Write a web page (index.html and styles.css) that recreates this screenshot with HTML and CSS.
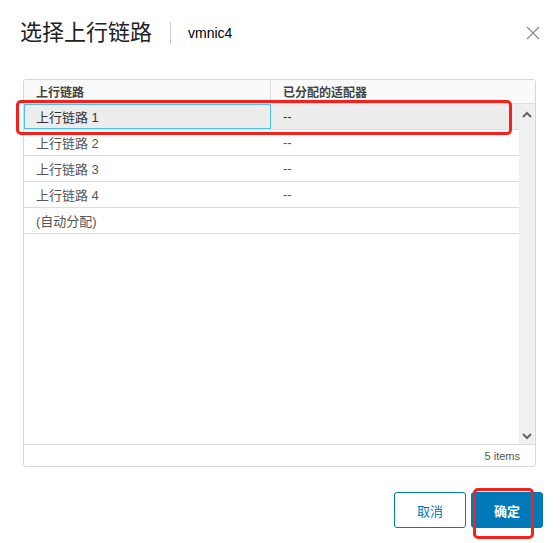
FILE: index.html
```html
<!DOCTYPE html>
<html lang="zh-CN">
<head>
    <meta charset="UTF-8">
    <title>选择上行链路</title>
    <link rel="stylesheet" href="styles.css">
</head>
<body>
    <div class="dialog">
        <div class="dialog-header">
            <h1 class="title">选择上行链路</h1>
            <span class="divider"></span>
            <span class="subtitle">vmnic4</span>
            <svg class="close" width="14" height="14" viewBox="0 0 14 14">
                <path d="M1 1 L13 13 M13 1 L1 13" stroke="#8c8c8c" stroke-width="1.3" fill="none"/>
            </svg>
        </div>

        <div class="grid">
            <div class="grid-head">
                <div class="cell col-a">上行链路</div>
                <div class="cell col-b">已分配的适配器</div>
            </div>
            <div class="grid-body">
                <div class="rows">
                    <div class="row selected">
                        <div class="cell col-a focused">上行链路 1</div>
                        <div class="cell col-b">--</div>
                    </div>
                    <div class="row">
                        <div class="cell col-a">上行链路 2</div>
                        <div class="cell col-b">--</div>
                    </div>
                    <div class="row">
                        <div class="cell col-a">上行链路 3</div>
                        <div class="cell col-b">--</div>
                    </div>
                    <div class="row">
                        <div class="cell col-a">上行链路 4</div>
                        <div class="cell col-b">--</div>
                    </div>
                    <div class="row">
                        <div class="cell col-a">(自动分配)</div>
                        <div class="cell col-b"></div>
                    </div>
                </div>
                <div class="scrollbar">
                    <svg width="10" height="8" viewBox="0 0 10 8"><path d="M1 6 L5 2 L9 6" stroke="#666" stroke-width="2" fill="none"/></svg>
                    <svg width="10" height="8" viewBox="0 0 10 8"><path d="M1 2 L5 6 L9 2" stroke="#666" stroke-width="2" fill="none"/></svg>
                </div>
            </div>
            <div class="grid-foot">5 items</div>
        </div>

        <div class="actions">
            <button class="btn btn-outline">取消</button>
            <button class="btn btn-primary">确定</button>
        </div>
    </div>

    <!-- red annotation boxes from the screenshot -->
    <div class="mark mark-row"></div>
    <div class="mark mark-ok"></div>
</body>
</html>
```

FILE: styles.css
```css
* {
    margin: 0;
    padding: 0;
    box-sizing: border-box;
}
body {
    width: 560px;
    height: 543px;
    background: #fff;
    font-family: "Liberation Sans", "Noto Sans CJK SC", sans-serif;
    color: #333;
    position: relative;
    overflow: hidden;
}
.dialog {
    padding: 18px 17px 0 23px;
}
.dialog-header {
    display: flex;
    align-items: center;
    height: 30px;
    margin-left: -3px;
    padding-right: 3px;
}
.title {
    font-size: 22px;
    font-weight: normal;
    line-height: 30px;
    color: #222;
}
.divider {
    width: 1px;
    height: 22px;
    background: #ccc;
    margin: 0 17px 0 18px;
}
.subtitle {
    font-size: 14px;
    color: #000;
}
.close {
    margin-left: auto;
    margin-right: 0;
}
.grid {
    margin-top: 31px;
    width: 513px;
    height: 388px;
    border: 1px solid #d7d7d7;
    border-radius: 3px;
    display: flex;
    flex-direction: column;
}
.grid-head {
    display: flex;
    height: 24px;
    background: #fafafa;
    border-bottom: 1px solid #ddd;
    font-weight: bold;
    font-size: 12px;
    color: #444;
}
.cell {
    padding-left: 12px;
    display: flex;
    align-items: center;
    white-space: nowrap;
}
.col-a {
    width: 247px;
    border-right: 1px solid #ddd;
}
.col-b {
    flex: 1;
}
.grid-body {
    flex: 1;
    display: flex;
}
.rows {
    flex: 1;
}
.row {
    display: flex;
    height: 26px;
    border-bottom: 1px solid #ddd;
    font-size: 13px;
    color: #565656;
}
.row .col-a {
    border-right: none;
}
.row.selected {
    background: #ededed;
    color: #333;
}
.row .focused {
    border: 1px solid #49c3f0;
    padding-left: 11px;
    width: 247px;
}
.scrollbar {
    width: 16px;
    background: #f0f0f0;
    display: flex;
    flex-direction: column;
    justify-content: space-between;
    align-items: center;
    padding: 7px 0 4px;
}
.grid-foot {
    height: 22px;
    border-top: 1px solid #ddd;
    font-size: 11px;
    color: #565656;
    display: flex;
    align-items: center;
    justify-content: flex-end;
    padding-right: 15px;
}
.actions {
    display: flex;
    justify-content: flex-end;
    gap: 5px;
    margin-top: 25px;
}
.btn {
    width: 72px;
    height: 36px;
    border-radius: 3px;
    font-family: "Liberation Sans", "Noto Sans CJK SC", sans-serif;
    font-size: 13px;
    cursor: pointer;
}
.btn-outline {
    background: #fff;
    border: 1px solid #0079b8;
    color: #0079b8;
}
.btn-primary {
    background: #0079b8;
    border: 1px solid #0079b8;
    color: #fff;
    font-weight: bold;
}
.mark {
    position: absolute;
    border: 3px solid #f5211d;
    border-radius: 5px;
}
.mark-row {
    left: 16px;
    top: 100px;
    width: 496px;
    height: 35px;
}
.mark-ok {
    left: 473px;
    top: 488px;
    width: 61px;
    height: 51px;
}
```
